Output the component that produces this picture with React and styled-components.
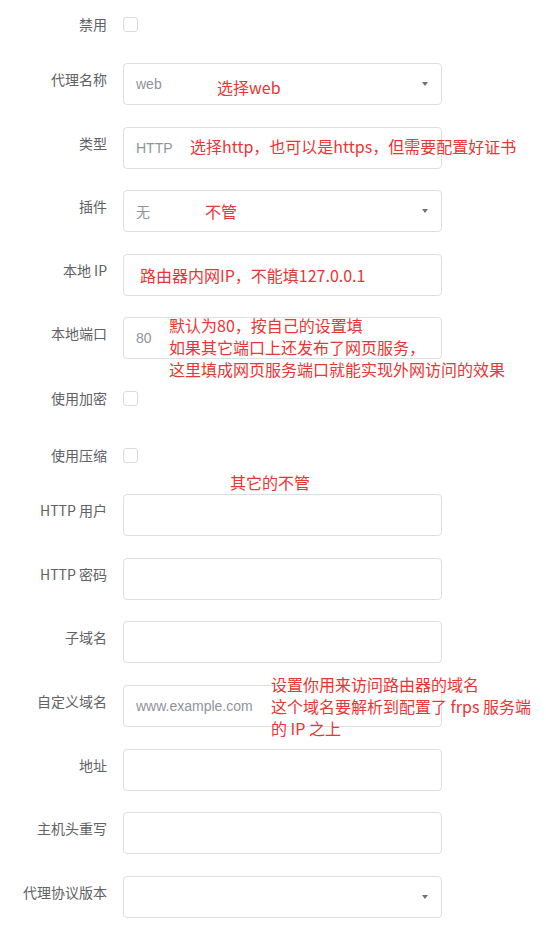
import React from "react";
import styled, { createGlobalStyle } from "styled-components";

const Global = createGlobalStyle`
  html, body { margin: 0; padding: 0; background: #ffffff; }
  body { font-family: "Noto Sans CJK SC", "Liberation Sans", sans-serif; }
`;

const Page = styled.div`
  position: relative;
  width: 546px;
  height: 930px;
  overflow: hidden;
  background: #fff;
`;

const Form = styled.div`
  display: flex;
  flex-direction: column;
  gap: 21.6px;
  padding-top: 6.4px;
`;

const Row = styled.div`
  display: flex;
  align-items: ${(p) => (p.$check ? "center" : "flex-start")};
  height: ${(p) => (p.$check ? "35px" : "42px")};
`;

const Label = styled.div`
  width: 107px;
  flex: none;
  text-align: right;
  padding-right: 16px;
  box-sizing: content-box;
  font-size: 14px;
  line-height: ${(p) => (p.$check ? "20px" : "32px")};
  color: #606266;
  white-space: nowrap;
  font-family: "Noto Sans CJK SC", sans-serif;
`;

const Box = styled.span`
  display: inline-block;
  width: 15px;
  height: 15px;
  border: 1px solid #d8dbe2;
  border-radius: 3px;
  background: #fff;
  box-sizing: border-box;
  margin-top: 1px;
`;

const Field = styled.div`
  position: relative;
  width: 319px;
  height: 42px;
  box-sizing: border-box;
  border: 1px solid #dcdfe6;
  border-radius: 4px;
  background: #fff;
  display: flex;
  align-items: center;
  padding: 0 30px 0 12px;
  font-family: "Liberation Sans", "Noto Sans CJK SC", sans-serif;
  font-size: 14px;
  color: #8e949c;
`;

const Caret = styled.span`
  position: absolute;
  right: 13px;
  top: 50%;
  margin-top: -2px;
  width: 0;
  height: 0;
  border-left: 3.5px solid transparent;
  border-right: 3.5px solid transparent;
  border-top: 4px solid #6e7177;
`;

const Notes = styled.div`
  position: absolute;
  inset: 0;
  pointer-events: none;
`;

const Note = styled.div`
  position: absolute;
  left: ${(p) => p.$x}px;
  top: ${(p) => p.$y}px;
  font-family: "Liberation Sans Narrow", "Noto Sans CJK SC", sans-serif;
  font-size: 16px;
  line-height: 22px;
  color: #ea3535;
  white-space: pre;
`;

const rows = [
  { label: "禁用", check: true },
  { label: "代理名称", value: "web", select: true },
  { label: "类型", value: "HTTP" },
  { label: "插件", value: "无", select: true },
  { label: "本地 IP", value: "" },
  { label: "本地端口", value: "80" },
  { label: "使用加密", check: true },
  { label: "使用压缩", check: true },
  { label: "HTTP 用户", value: "" },
  { label: "HTTP 密码", value: "" },
  { label: "子域名", value: "" },
  { label: "自定义域名", value: "www.example.com" },
  { label: "地址", value: "" },
  { label: "主机头重写", value: "" },
  { label: "代理协议版本", value: "", select: true },
];

const notes = [
  { x: 217, y: 76, text: "选择web" },
  { x: 190, y: 135, text: "选择http，也可以是https，但需要配置好证书" },
  { x: 205, y: 200, text: "不管" },
  { x: 140, y: 264, text: "路由器内网IP，不能填127.0.0.1" },
  {
    x: 169,
    y: 314,
    text: "默认为80，按自己的设置填\n如果其它端口上还发布了网页服务，\n这里填成网页服务端口就能实现外网访问的效果",
  },
  { x: 230, y: 471, text: "其它的不管" },
  {
    x: 271,
    y: 673,
    text: "设置你用来访问路由器的域名\n这个域名要解析到配置了 frps 服务端\n的 IP 之上",
  },
];

export default function App() {
  return (
    <Page>
      <Global />
      <Form>
        {rows.map((r) => (
          <Row key={r.label} $check={r.check}>
            <Label $check={r.check}>{r.label}</Label>
            {r.check ? (
              <Box />
            ) : (
              <Field>
                {r.value}
                {r.select && <Caret />}
              </Field>
            )}
          </Row>
        ))}
      </Form>
      <Notes>
        {notes.map((n) => (
          <Note key={n.text} $x={n.x} $y={n.y}>
            {n.text}
          </Note>
        ))}
      </Notes>
    </Page>
  );
}
